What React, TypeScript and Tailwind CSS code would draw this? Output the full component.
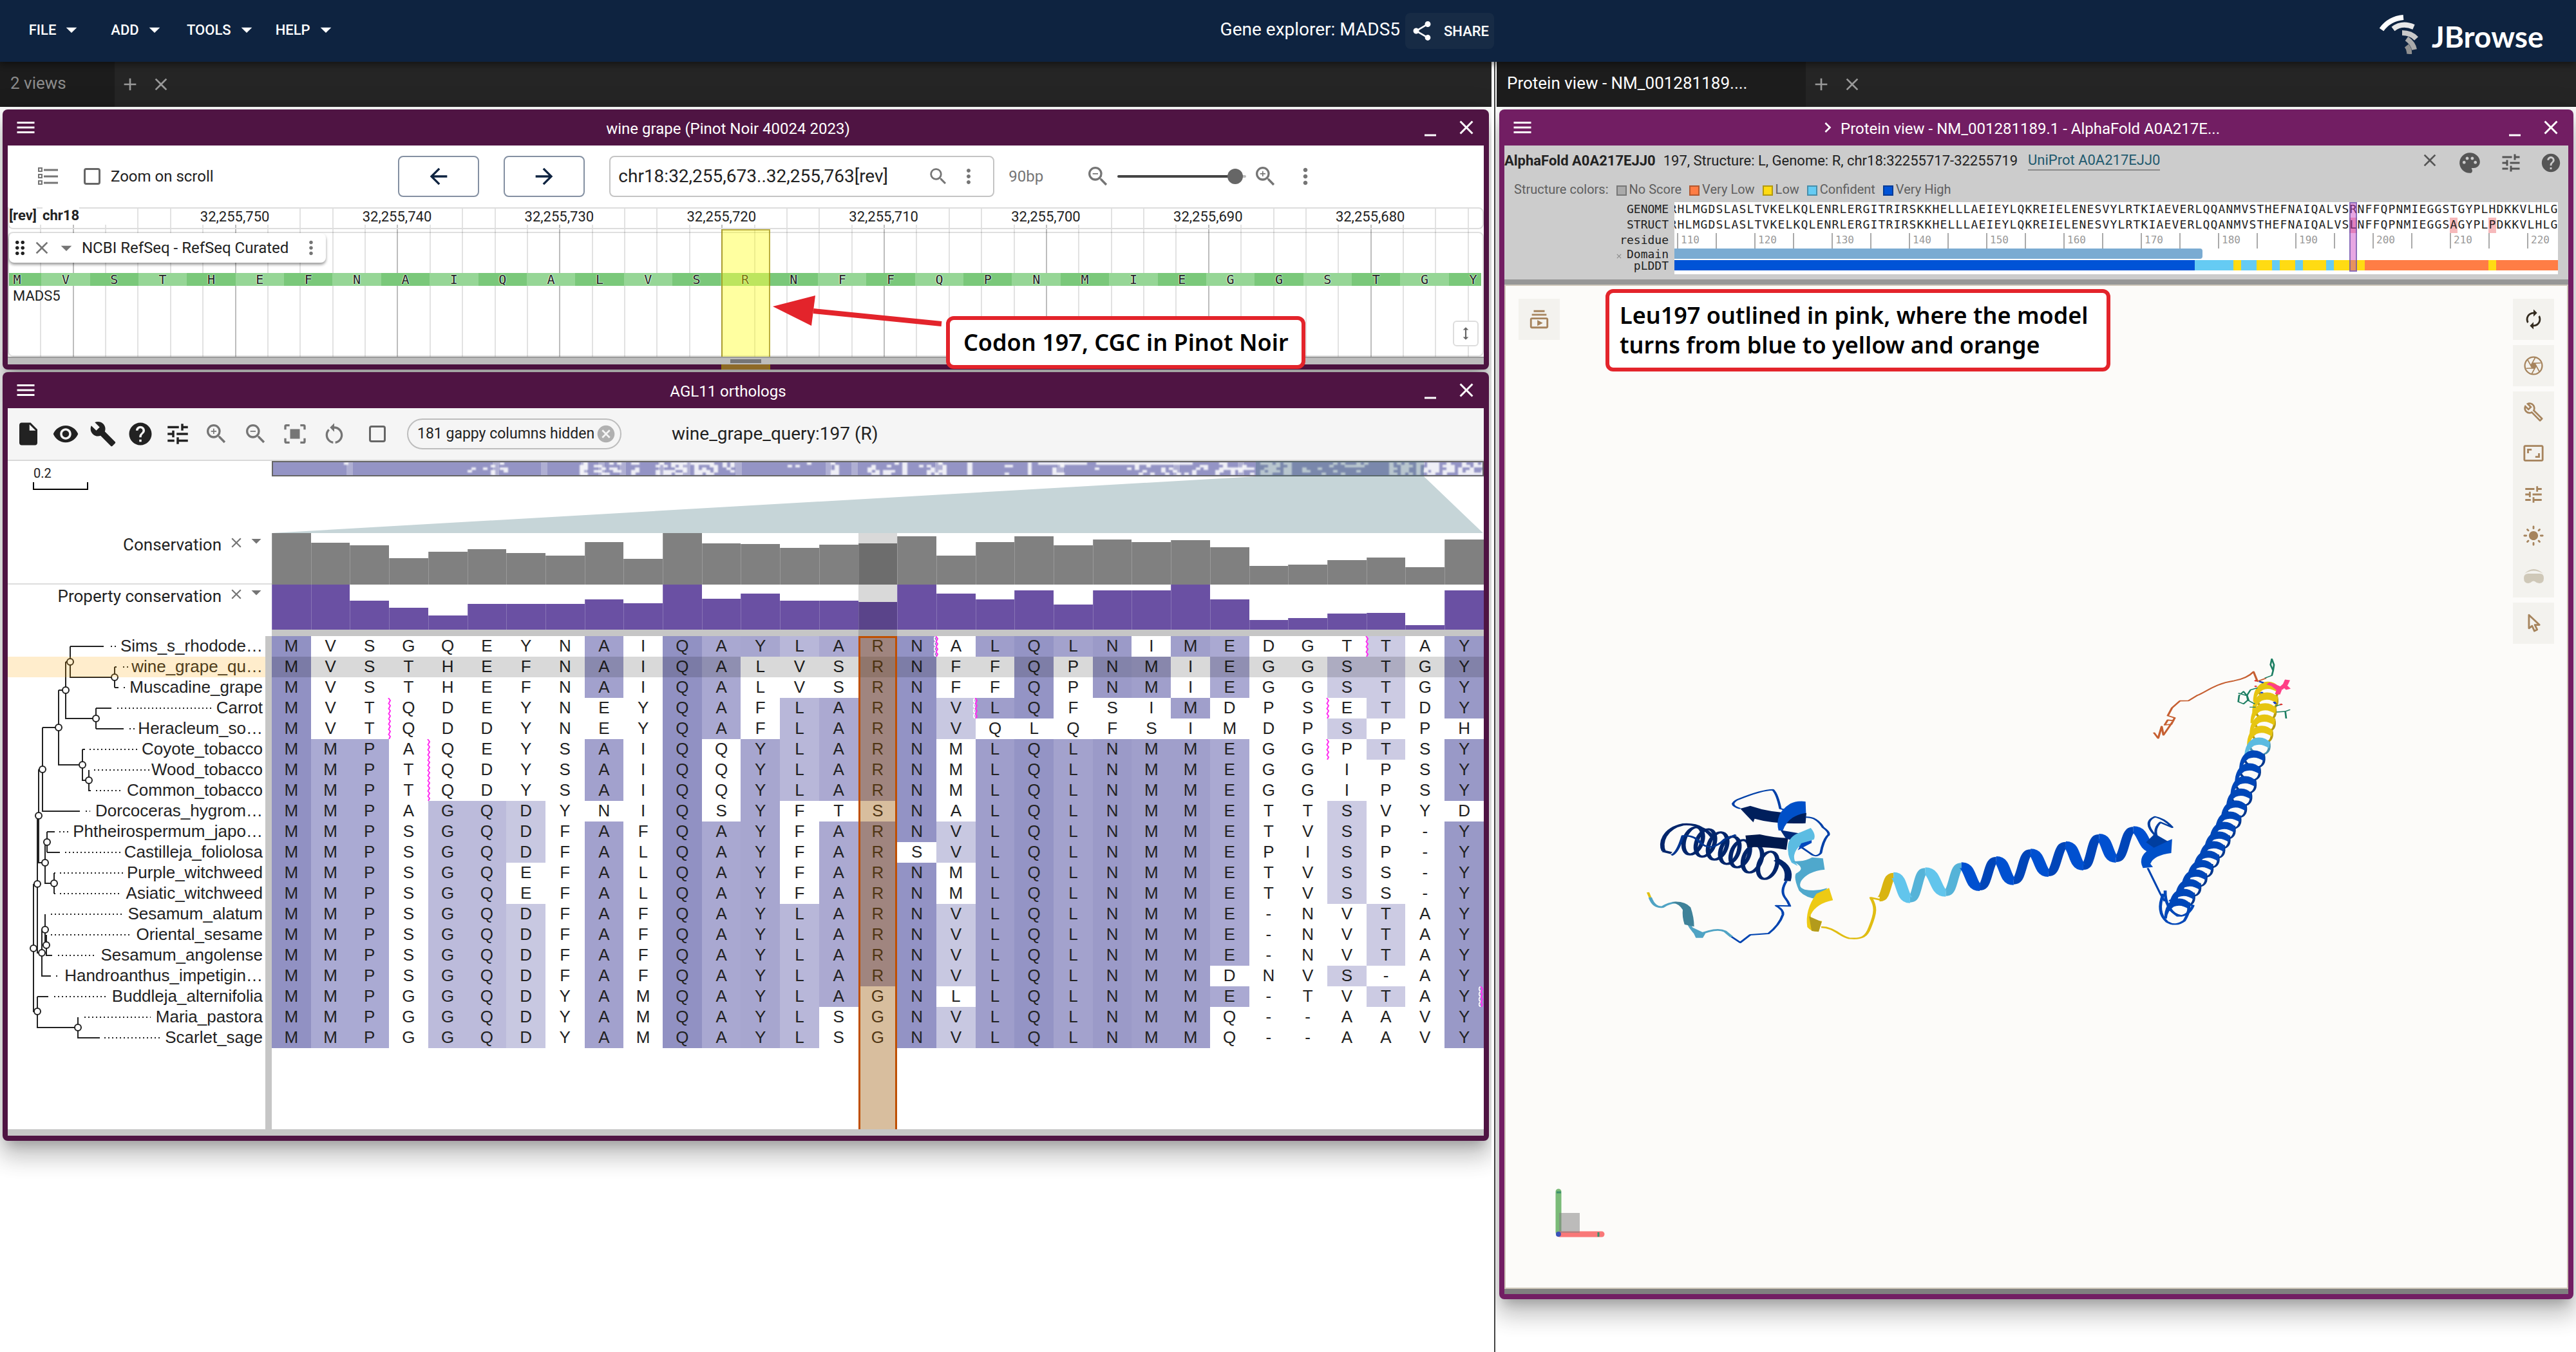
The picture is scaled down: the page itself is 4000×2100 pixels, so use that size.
import type { ReactNode } from "react";
import {
  MdArrowBack,
  MdArrowDropDown,
  MdArrowForward,
  MdAspectRatio,
  MdAutorenew,
  MdBuild,
  MdCancel,
  MdChevronRight,
  MdClose,
  MdDragIndicator,
  MdHeight,
  MdHelp,
  MdInsertDriveFile,
  MdLightMode,
  MdMenu,
  MdMinimize,
  MdMoreVert,
  MdOutlineBuild,
  MdOutlineSubscriptions,
  MdPalette,
  MdRestartAlt,
  MdSearch,
  MdShare,
  MdTune,
  MdVisibility,
  MdZoomIn,
  MdZoomOut,
  MdAdd,
} from "react-icons/md";

const BP_SHOWN = 91;
const pct = (n: number, total: number) => `${(n / total) * 100}%`;

export default function App() {
  return (
    <div className="flex min-h-screen flex-col bg-white text-[#222] [font-family:Roboto,sans-serif]">
      <AppHeader />
      <main className="grid flex-1 grid-cols-[2322fr_1678fr]">
        <section className="flex min-w-0 border-r-2 border-[#444] pr-1">
          <div className="min-w-0 flex-1 overflow-hidden">
            <TabBar label="2 views" />
            <div className="flex flex-col gap-1 p-1">
              <LinearGenomeView />
              <MsaView />
            </div>
          </div>
        </section>
        <section className="min-w-0 overflow-hidden pl-0.5">
          <TabBar label="Protein view - NM_001281189...." active />
          <div className="p-1">
            <ProteinView />
          </div>
        </section>
      </main>
    </div>
  );
}

function AppHeader() {
  return (
    <header className="relative z-10 flex h-24 items-center justify-between bg-[#0e2340] pr-[42px] pl-[22px] text-white shadow-[0_4px_10px_rgba(0,0,0,0.45)]">
      <nav className="flex pb-1">
        {["FILE", "ADD", "TOOLS", "HELP"].map((item) => (
          <button
            key={item}
            className="flex min-w-32 items-center justify-center px-3 text-[22px] font-medium"
          >
            {item}
            <MdArrowDropDown size={40} className="-mr-1 ml-1" />
          </button>
        ))}
      </nav>
      <div className="mr-4 flex items-center gap-2">
        <span className="pb-1 text-[28px]">Gene explorer: MADS5</span>
        <button className="flex h-14 items-center gap-4 rounded-lg bg-[#172b45] px-2 text-[22px] font-medium">
          <MdShare size={36} />
          SHARE
        </button>
      </div>
      <Logo />
    </header>
  );
}

function Logo() {
  return (
    <svg width="266" height="72" viewBox="0 0 266 72" fill="none" strokeWidth="8">
      <path d="M6 34 Q18 17 40 15" stroke="#fff" />
      <path d="M24 33 Q38 22 56 30" stroke="#e8e8e8" />
      <path d="M38 39 Q52 39 60 48" stroke="#c9c9c9" />
      <path d="M45 48 Q55 55 57 65" stroke="#aaa" />
      <path d="M45 59 Q50 65 49 72" stroke="#8f8f8f" />
      <text
        x="84"
        y="62"
        fill="#fff"
        className="text-[46px] font-bold [font-family:Lato,sans-serif]"
      >
        JBrowse
      </text>
    </svg>
  );
}

function TabBar({ label, active }: { label: string; active?: boolean }) {
  return (
    <div className="flex h-[70px] items-center bg-[#252525] text-[#999]">
      <div
        className={
          active
            ? "flex h-full w-[480px] items-center bg-[#1c1c1c] px-4 pb-1 text-[26px] text-white"
            : "flex h-full w-[178px] items-center bg-[#1c1c1c] px-4 pb-1 text-[26px] text-[#8c8c8c]"
        }
      >
        {label}
      </div>
      <button aria-label="Add view" className="ml-2">
        <MdAdd size={32} />
      </button>
      <button aria-label="Close tab" className="ml-4">
        <MdClose size={32} />
      </button>
    </div>
  );
}

function ViewWindow({
  title,
  protein,
  children,
}: {
  title: string;
  protein?: boolean;
  children: ReactNode;
}) {
  return (
    <article
      className={`rounded-lg pb-2 shadow-[0_14px_16px_-8px_rgba(0,0,0,0.2),0_24px_34px_4px_rgba(0,0,0,0.14),0_10px_44px_8px_rgba(0,0,0,0.12)] ${
        protein ? "bg-[#721e63]" : "bg-[#4f1443]"
      }`}
    >
      <header className="flex h-14 items-center pr-[17px] pl-[18px] text-white">
        <button aria-label="View menu">
          <MdMenu size={36} />
        </button>
        <h2 className="flex flex-1 items-center justify-center pt-1 text-[24px]">
          {protein && <MdChevronRight size={32} className="mr-1 -mt-1" />}
          {title}
        </h2>
        <button aria-label="Minimize" className="mr-5">
          <MdMinimize size={36} />
        </button>
        <button aria-label="Close view">
          <MdClose size={36} />
        </button>
      </header>
      <div className="mx-2">{children}</div>
    </article>
  );
}

/* ---------- linear genome view ---------- */

const CODONS = "MVSTHEFNAIQALVSRNFFQPNMIEGGSTGY".split("");
const MAJOR_TICKS = [4, 14, 24, 34, 44, 54, 64, 74, 84];
const MINOR_TICKS = Array.from({ length: 46 }, (_, i) => i * 2);

function LinearGenomeView() {
  return (
    <ViewWindow title="wine grape (Pinot Noir 40024 2023)">
      <div className="relative bg-white">
        <LgvControls />
        <Ruler />
        <div className="relative h-[198px]">
          <GridLines />
          <div className="absolute inset-x-0 top-1 bottom-0 rounded-lg border-2 border-[#0000001f]" />
          <TrackLabel />
          <div className="absolute top-[66px] right-1 left-0.5 h-6 overflow-hidden">
            {CODONS.map((aa, i) => (
              <span
                key={i}
                className={`absolute top-0 h-6 border-y-2 border-transparent bg-clip-padding text-center text-[20px] leading-5 [font-family:'DejaVu_Sans_Mono',monospace] [text-shadow:0_0_2px_#fff,0_0_2px_#fff] ${
                  i % 2 ? "bg-[#96d696]" : "bg-[#7ac87a]"
                }`}
                style={{ left: pct(i * 3 - 1, BP_SHOWN), width: pct(3, BP_SHOWN) }}
              >
                {aa}
              </span>
            ))}
          </div>
          <span className="absolute top-[90px] left-2 text-[22px] leading-7">MADS5</span>
          <button
            aria-label="Resize track"
            className="absolute right-2 bottom-4 flex h-10 w-10 items-center justify-center rounded-md border-2 border-[#ddd] bg-white text-[#666]"
          >
            <MdHeight size={26} />
          </button>
          <div
            className="absolute top-0 -bottom-5 border-x-2 border-t-2 border-[#8c780099] bg-[#ffff005f]"
            style={{ left: pct(44, BP_SHOWN), width: pct(3, BP_SHOWN) }}
          />
        </div>
        <div className="relative flex h-3 items-center justify-center border-t-2 border-[#999] bg-[#bdbdbd]">
          <div className="h-1.5 w-12 bg-[#757575]" />
        </div>
        <Annotation />
      </div>
    </ViewWindow>
  );
}

function LgvControls() {
  return (
    <div className="flex h-24 items-center pl-11">
      <button aria-label="Open track selector" className="text-[#757575]">
        <svg width="36" height="36" viewBox="0 0 36 36" fill="none" stroke="currentColor">
          {[8, 18, 28].map((y) => (
            <g key={y}>
              <rect x="4" y={y - 3} width="5" height="5" strokeWidth="2" />
              <path d={`M12 ${y}H34`} strokeWidth="3" />
            </g>
          ))}
        </svg>
      </button>
      <label className="ml-[38px] flex items-center gap-4 text-[24px]">
        <input
          type="checkbox"
          className="h-[26px] w-[26px] appearance-none rounded-sm border-[3px] border-[#666]"
        />
        Zoom on scroll
      </label>
      <div className="flex-1" />
      <div className="ml-[30px] flex items-center">
        <button
          aria-label="Pan left"
          className="flex h-16 w-[126px] items-center justify-center rounded-lg border-2 border-[#8490a2] text-[#0e2340]"
        >
          <MdArrowBack size={40} />
        </button>
        <button
          aria-label="Pan right"
          className="ml-[38px] flex h-16 w-[126px] items-center justify-center rounded-lg border-2 border-[#8490a2] text-[#0e2340]"
        >
          <MdArrowForward size={40} />
        </button>
        <div className="ml-[38px] flex h-16 w-[598px] items-center rounded-lg border-2 border-[#c4c4c4] pl-3 text-[#757575]">
          <input
            aria-label="Location"
            className="min-w-0 flex-1 text-[28px] text-[#222]"
            defaultValue="chr18:32,255,673..32,255,763[rev]"
          />
          <MdSearch size={34} />
          <MdMoreVert size={36} className="mr-5 ml-3" />
        </div>
        <span className="ml-[22px] w-[119px] text-[24px] text-[#757575]">90bp</span>
        <button aria-label="Zoom out" className="text-[#757575]">
          <MdZoomOut size={40} />
        </button>
        <input
          type="range"
          aria-label="Zoom"
          defaultValue={97}
          className="mx-2.5 h-1 w-[200px] appearance-none rounded bg-[linear-gradient(to_right,#444_92%,#bbb_92%)] [&::-webkit-slider-thumb]:h-6 [&::-webkit-slider-thumb]:w-6 [&::-webkit-slider-thumb]:appearance-none [&::-webkit-slider-thumb]:rounded-full [&::-webkit-slider-thumb]:bg-[#666]"
        />
        <button aria-label="Zoom in" className="text-[#757575]">
          <MdZoomIn size={40} />
        </button>
        <button aria-label="More" className="ml-[22px] text-[#757575]">
          <MdMoreVert size={40} />
        </button>
      </div>
      <div className="flex-1" />
    </div>
  );
}

function GridLines() {
  return (
    <>
      {MINOR_TICKS.map((bp) => (
        <div
          key={bp}
          className={`absolute inset-y-0 w-0.5 ${
            MAJOR_TICKS.includes(bp) ? "bg-[#bdbdbd]" : "bg-[#e2e2e2]"
          }`}
          style={{ left: pct(bp, BP_SHOWN) }}
        />
      ))}
    </>
  );
}

function Ruler() {
  return (
    <div className="relative h-[34px] overflow-hidden">
      <GridLines />
      {MAJOR_TICKS.map((bp, i) => (
        <span
          key={bp}
          className="absolute top-0.5 flex h-[25px] w-[110px] -translate-x-1/2 items-center justify-center bg-white text-[22px]"
          style={{ left: pct(bp, BP_SHOWN) }}
        >
          {i === 0 ? "" : `32,255,${760 - i * 10}`}
        </span>
      ))}
      <div className="absolute inset-0 rounded-lg border-2 border-[#ddd]" />
      <span className="absolute top-0 left-0.5 bg-white text-[22px] leading-[26px] font-bold">
        [rev]
      </span>
      <span className="absolute top-0 left-[54px] bg-white text-[22px] leading-[26px] font-bold">
        chr18
      </span>
    </div>
  );
}

function TrackLabel() {
  return (
    <div className="absolute top-1.5 left-0.5 flex h-[46px] w-[492px] items-center rounded-lg bg-white text-[24px] shadow-[0_3px_4px_rgba(0,0,0,0.4)]">
      <MdDragIndicator size={34} />
      <button aria-label="Close track" className="ml-px text-[#757575]">
        <MdClose size={32} />
      </button>
      <button aria-label="Collapse track" className="mr-1 ml-0.5 text-[#757575]">
        <MdArrowDropDown size={40} />
      </button>
      <span className="flex-1">NCBI RefSeq - RefSeq Curated</span>
      <button aria-label="Track menu" className="mr-1.5 text-[#757575]">
        <MdMoreVert size={34} />
      </button>
    </div>
  );
}

// callout and arrow float over the tracks
function Annotation() {
  return (
    <div className="absolute bottom-[-7px] left-[51.8%] flex w-[828px] items-start justify-end">
      <svg width="270" height="120" viewBox="0 0 270 120" className="absolute top-[-36px] left-0">
        <path d="M64 28L263 48" stroke="#e3242b" strokeWidth="8" />
        <path d="M1 21L67 4L61 51Z" fill="#e3242b" />
      </svg>
      <p className="flex h-[82px] w-[558px] items-center justify-center rounded-xl border-6 border-[#e3242b] bg-white text-[36px] font-semibold text-black [font-family:'Noto_Sans',sans-serif]">
        Codon 197, CGC in Pinot Noir
      </p>
    </div>
  );
}

/* ---------- multiple sequence alignment ---------- */

type Row = { name: string; seq: string; dots: [number, number]; inserts?: number[] };

const ROWS: Row[] = [
  { name: "Sims_s_rhodode…", seq: "MVSGQEYNAIQAYLARNALQLNIMEDGTTAY", dots: [172, 183], inserts: [17, 28] },
  { name: "wine_grape_qu…", seq: "MVSTHEFNAIQALVSRNFFQPNMIEGGSTGY", dots: [191, 200] },
  { name: "Muscadine_grape", seq: "MVSTHEFNAIQALVSRNFFQPNMIEGGSTGY", dots: [192, 197] },
  { name: "Carrot", seq: "MVTQDEYNEYQAFLARNVLQFSIMDPSETDY", dots: [182, 332], inserts: [3, 18, 27] },
  { name: "Heracleum_so…", seq: "MVTQDDYNEYQAFLARNVQLQFSIMDPSPPH", dots: [201, 211], inserts: [3] },
  { name: "Coyote_tobacco", seq: "MMPAQEYSAIQQYLARNMLQLNMMEGGPTSY", dots: [139, 215], inserts: [4, 27] },
  { name: "Wood_tobacco", seq: "MMPTQDYSAIQQYLARNMLQLNMMEGGIPSY", dots: [146, 232], inserts: [4] },
  { name: "Common_tobacco", seq: "MMPTQDYSAIQQYLARNMLQLNMMEGGIPSY", dots: [149, 190], inserts: [4] },
  { name: "Dorcoceras_hygrom…", seq: "MMPAGQDYNIQSYFTSNALQLNMMETTSVYD", dots: [133, 140] },
  { name: "Phtheirospermum_japo…", seq: "MMPSGQDFAFQAYFARNVLQLNMMETVSP-Y", dots: [92, 106] },
  { name: "Castilleja_foliolosa", seq: "MMPSGQDFALQAYFARSVLQLNMMEPISP-Y", dots: [101, 187] },
  { name: "Purple_witchweed", seq: "MMPSGQEFALQAYFARNMLQLNMMETVSS-Y", dots: [93, 191] },
  { name: "Asiatic_witchweed", seq: "MMPSGQEFALQAYFARNMLQLNMMETVSS-Y", dots: [93, 189] },
  { name: "Sesamum_alatum", seq: "MMPSGQDFAFQAYLARNVLQLNMME-NVTAY", dots: [79, 191] },
  { name: "Oriental_sesame", seq: "MMPSGQDFAFQAYLARNVLQLNMME-NVTAY", dots: [79, 205] },
  { name: "Sesamum_angolense", seq: "MMPSGQDFAFQAYLARNVLQLNMME-NVTAY", dots: [90, 150] },
  { name: "Handroanthus_impetigin…", seq: "MMPSGQDFAFQAYLARNVLQLNMMDNVS-AY", dots: [87, 92] },
  { name: "Buddleja_alternifolia", seq: "MMPGGQDYAMQAYLAGNLLQLNMME-TVTAY", dots: [84, 166], inserts: [31] },
  { name: "Maria_pastora", seq: "MMPGGQDYAMQAYLSGNVLQLNMMQ--AAVY", dots: [131, 234] },
  { name: "Scarlet_sage", seq: "MMPGGQDYAMQAYLSGNVLQLNMMQ--AAVY", dots: [162, 250] },
];

const N_COLS = 31;
const CONSENSUS = "MMP GQD A QAYLARNVLQLNMME  ST Y";
const SHADES = [
  "bg-[#9191c3]", "bg-[#aaaad3]", "bg-[#aaaad3]", "", "bg-[#bcbbdb]", "bg-[#bcbbdb]",
  "bg-[#c8c8e1]", "", "bg-[#a2a1cd]", "", "bg-[#9191c3]", "bg-[#a9a8d1]", "bg-[#a7a6cf]",
  "bg-[#b8b7d9]", "bg-[#aba9d1]", "bg-[#a5a4ce]", "bg-[#9393c5]", "bg-[#c8c8e1]",
  "bg-[#9f9ecb]", "bg-[#9494c5]", "bg-[#a3a2cd]", "bg-[#9b9ac8]", "bg-[#a09fcb]",
  "bg-[#a09fcb]", "bg-[#aaa9d2]", "", "", "bg-[#cccbe3]", "bg-[#cccbe3]", "", "bg-[#9999c7]",
];

const CONSERVATION = [
  80, 65, 61, 41, 51, 55, 49, 45, 66, 40, 80, 64, 63, 57, 62, 64, 75, 45, 66, 75, 61, 70, 66, 69,
  58, 29, 31, 38, 42, 27, 70,
];
const PROPERTY = [
  70, 70, 45, 34, 22, 40, 40, 40, 47, 41, 70, 48, 56, 45, 45, 43, 70, 56, 47, 61, 39, 61, 61, 70,
  47, 15, 18, 25, 26, 7, 61,
];

function MsaView() {
  return (
    <ViewWindow title="AGL11 orthologs">
      <MsaToolbar />
      <div className="flex bg-white">
        <div className="w-[410px] shrink-0">
          <div className="h-28 pt-[9px]">
            <span className="ml-10 text-[20px] leading-5">0.2</span>
            <div className="ml-[39px] h-3 w-[86px] border-2 border-t-0 border-black" />
          </div>
          <AnnotationTrackLabel name="Conservation" className="h-20 border-b-2 border-[#ddd]" />
          <AnnotationTrackLabel name="Property conservation" className="h-20" />
          <TreePane />
        </div>
        <div className="relative min-w-0 flex-1">
          <Minimap />
          <Histogram values={CONSERVATION} className="h-20" bar="bg-[#808080]" />
          <Histogram values={PROPERTY} className="h-[70px]" bar="bg-[#6a50a3]" />
          <div className="h-2.5 bg-[#c6c6c6]" />
          <AlignmentTable />
          <div
            className="absolute top-28 h-40 bg-black/15"
            style={{ left: pct(15, N_COLS), width: pct(1, N_COLS) }}
          />
          <div
            className="absolute top-[272px] bottom-0 border-3 border-b-0 border-[#bf4f00] bg-[#98540061]"
            style={{ left: pct(15, N_COLS), width: pct(1, N_COLS) }}
          />
        </div>
      </div>
      <div className="h-2.5 bg-[#c6c6c6]" />
    </ViewWindow>
  );
}

function MsaToolbar() {
  const dark = [MdInsertDriveFile, MdVisibility, MdBuild, MdHelp, MdTune];
  const light = [MdZoomIn, MdZoomOut, FitIcon, MdRestartAlt];
  return (
    <div className="flex h-[82px] items-center border-b-2 border-[#d9d9d9] bg-[#f5f5f5] pl-[3px]">
      {dark.map((Icon, i) => (
        <button key={i} className="flex w-[58px] justify-center text-[#222]">
          <Icon size={42} />
        </button>
      ))}
      {light.map((Icon, i) => (
        <button key={i} className="flex w-[61px] justify-center text-[#757575]">
          <Icon size={40} />
        </button>
      ))}
      <input
        type="checkbox"
        aria-label="Toggle selection"
        className="ml-6 h-[26px] w-[26px] appearance-none rounded-sm border-[3px] border-[#666]"
      />
      <div className="ml-[33px] flex h-12 w-[333px] items-center justify-between rounded-full border-2 border-[#bdbdbd] pr-1.5 pl-3.5 text-[23px]">
        181 gappy columns hidden
        <button aria-label="Show gappy columns" className="text-[#b0b0b0]">
          <MdCancel size={32} />
        </button>
      </div>
      <span className="ml-[78px] text-[28px]">wine_grape_query:197 (R)</span>
    </div>
  );
}

function FitIcon({ size }: { size: number }) {
  return (
    <svg width={size} height={size} viewBox="0 0 24 24" fill="currentColor">
      <rect x="7.5" y="7.5" width="9" height="9" />
      <path
        d="M3 8V5q0-1 1-1H7M17 4h3q1 0 1 1V8M21 16v3q0 1-1 1H17M7 20H4q-1 0-1-1V16"
        fill="none"
        stroke="currentColor"
        strokeWidth="2"
      />
    </svg>
  );
}

function AnnotationTrackLabel({ name, className }: { name: string; className: string }) {
  return (
    <div className={`flex items-start justify-end pt-0.5 pr-1.5 text-[26px] leading-8 ${className}`}>
      {name}
      <button aria-label={`Close ${name}`} className="ml-2.5 text-[#757575]">
        <MdClose size={26} />
      </button>
      <button aria-label={`${name} menu`} className="text-[#757575]">
        <MdArrowDropDown size={36} className="-mt-2" />
      </button>
    </div>
  );
}

function Histogram({
  values,
  className,
  bar,
}: {
  values: number[];
  className: string;
  bar: string;
}) {
  return (
    <div className={`flex items-end ${className}`}>
      {values.map((v, i) => (
        <div key={i} className={`flex-1 border-l border-white/20 ${bar}`} style={{ height: v }} />
      ))}
    </div>
  );
}

// [start, end, share of pixels that are gaps]
const GAP_REGIONS = [
  [112, 120, 0.15], [304, 312, 0.3], [328, 345, 0.35], [354, 366, 0.4], [390, 450, 0.05],
  [472, 490, 0.7], [500, 545, 0.25], [558, 568, 0.6], [596, 690, 0.55], [700, 738, 0.2],
  [795, 835, 0.2], [868, 880, 0.5], [925, 968, 0.35], [1005, 1045, 0.25], [1138, 1150, 0.6],
  [1200, 1300, 0.15], [1310, 1370, 0.2], [1375, 1530, 0.3], [1535, 1580, 0.55],
  [1600, 1700, 0.25], [1735, 1790, 0.5], [1788, 1882, 0.55],
];

// columns that are only partly conserved show as paler stripes
const PALE_STRIPES = [116, 343, 418, 480, 507, 540, 600, 640, 720, 860, 900, 1030, 1220, 1400, 1500];

function Minimap() {
  const gaps: ReactNode[] = [];
  let seed = 7;
  for (const [from, to, share] of GAP_REGIONS) {
    for (let x = from; x < to; x += 6) {
      for (let y = 2; y < 22; y += 4) {
        seed = (seed * 16807) % 2147483647;
        if (seed / 2147483647 < share) {
          gaps.push(<rect key={`${x}-${y}`} x={x} y={y} width="7" height="4" />);
        }
      }
    }
  }
  return (
    <svg
      viewBox="0 0 1882 112"
      preserveAspectRatio="none"
      className="block h-28 w-full"
    >
      <rect x="1" y="1" width="1880" height="22" fill="#9494c5" />
      <g fill="#fff" opacity="0.25">
        {PALE_STRIPES.map((x) => (
          <rect key={x} x={x} y="2" width="10" height="20" />
        ))}
      </g>
      <g fill="#fff" className="opacity-85 blur-[1px]">
        {gaps}
        <rect x="979" y="2" width="8" height="20" />
        <rect x="1080" y="2" width="8" height="20" />
        <rect x="1174" y="2" width="6" height="20" />
        <rect x="1190" y="2" width="76" height="4" />
        <rect x="1280" y="2" width="150" height="4" />
      </g>
      <path d="M1528 24H1789L1881 112H0Z" fill="#c6d5d8" />
      <rect x="1" y="1" width="1880" height="22" fill="none" stroke="#666" strokeWidth="2" />
      <rect x="1528" y="0" width="261" height="24" fill="#44707a" opacity="0.32" />
    </svg>
  );
}

function AlignmentTable() {
  return (
    <div className="h-[766px]">
      <table className="w-full table-fixed border-collapse text-center text-[26px] leading-[30px] [font-family:'Liberation_Sans',Arial,sans-serif]">
        <tbody>
          {ROWS.map((row, r) => (
            <tr key={r} className="h-8">
              {row.seq.split("").map((aa, c) => (
                <td
                  key={c}
                  className={`relative p-0 pb-0.5 ${aa === CONSENSUS[c] ? SHADES[c] : ""}`}
                >
                  {aa}
                  {row.inserts?.includes(c) && <InsertMark className="-left-1" />}
                  {c === N_COLS - 1 && row.inserts?.includes(N_COLS) && (
                    <InsertMark className="right-0" />
                  )}
                  {r === 1 && <span className="absolute inset-0 bg-black/15" />}
                </td>
              ))}
            </tr>
          ))}
        </tbody>
      </table>
    </div>
  );
}

function InsertMark({ className }: { className: string }) {
  return (
    <svg width="8" height="32" viewBox="0 0 8 32" className={`absolute top-0 z-10 ${className}`}>
      <path
        d="M3 0L0 4L3 8L0 12L3 16L0 20L3 24L0 28L3 32"
        fill="none"
        stroke="#fff"
        strokeWidth="2"
      />
      <path
        d="M3 0L6 4L4 8M3 8L6 12L4 16M3 16L6 20L4 24M3 24L6 28L4 32"
        fill="none"
        stroke="#ff2bf0"
        strokeWidth="2"
      />
    </svg>
  );
}

const TREE_LINES =
  "M109 1004H161M109 1004V1052H178M178 1036V1068M178 1036H181M178 1068H184M102 1028H109" +
  "M102 1028V1116H149M149 1100V1132M149 1100H173M149 1132H192M91 1072H102M91 1072V1188H128" +
  "M128 1164V1212H138M128 1164H132M138 1196V1228H141M66 1130H91M66 1130V1260H124M60 1195H66" +
  "M60 1195V1340H70M70 1308V1372H84M70 1308H73M73 1292V1324M73 1292H85M73 1324H93M84 1356V1388" +
  "M84 1356H86M84 1388H86M58 1267H60M58 1267V1480H65M65 1444V1516H79M65 1444H70M70 1420V1468H72" +
  "M72 1452V1484H81M52 1373H58M52 1373V1571H58M58 1548V1596H121M58 1548H75M121 1580V1612H155";

const TREE_NODES = [
  [109, 1028], [178, 1052], [102, 1072], [149, 1116], [91, 1130], [128, 1188], [138, 1212],
  [66, 1195], [60, 1267], [73, 1308], [70, 1340], [84, 1372], [58, 1373], [70, 1444],
  [72, 1468], [65, 1480], [52, 1473], [58, 1571], [121, 1596],
];

function TreePane() {
  return (
    <div className="relative h-[766px] border-r-10 border-[#c6c6c6]">
      <ul className="pr-1 text-right text-[26px] [font-family:'Liberation_Sans',Arial,sans-serif]">
        {ROWS.map((row) => (
          <li key={row.name} className="h-8 leading-[30px]">
            {row.name}
          </li>
        ))}
      </ul>
      <svg
        width="400"
        height="640"
        viewBox="12 988 400 640"
        fill="none"
        stroke="#222"
        strokeWidth="2"
        className="absolute top-0 left-0"
      >
        <path d={TREE_LINES} />
        {ROWS.map((row, i) => (
          <path
            key={row.name}
            d={`M${row.dots[0]} ${1004 + i * 32}H${row.dots[1]}`}
            strokeDasharray="2 4"
          />
        ))}
        {TREE_NODES.map(([x, y]) => (
          <circle key={`${x}-${y}`} cx={x} cy={y} r="5" fill="#fff" />
        ))}
      </svg>
      <div className="absolute inset-x-0 top-8 h-8 bg-[#ffa50033]" />
    </div>
  );
}

/* ---------- protein view ---------- */

const GENOME_SEQ =
  "RHLMGDSLASLTVKELKQLENRLERGITRIRSKKHELLLAEIEYLQKREIELENESVYLRTKIAEVERLQQANMVSTHEFNAIQALVSRNFFQPNMIEGGSTGYPLHDKKVLHLG";
const STRUCT_SEQ =
  "RHLMGDSLASLTVKELKQLENRLERGITRIRSKKHELLLAEIEYLQKREIELENESVYLRTKIAEVERLQQANMVSTHEFNAIQALVSLNFFQPNMIEGGSAGYPLPDKKVLHLG";

const LEGEND = [
  ["No Score", "bg-[#aaa] border-[#777]"],
  ["Very Low", "bg-[#ff7d45] border-[#b3582f]"],
  ["Low", "bg-[#ffdb13] border-[#b3990d]"],
  ["Confident", "bg-[#65cbf3] border-[#478eaa]"],
  ["Very High", "bg-[#0053d6] border-[#003a96]"],
];

const HIGH = "bg-[#0053d6]";
const CONF = "bg-[#65cbf3]";
const LOW = "bg-[#ffdb13]";
const VLOW = "bg-[#ff7d45]";
const PLDDT: [string, number][] = [
  [HIGH, 68], [CONF, 5], [LOW, 1], [CONF, 2], [LOW, 2], [CONF, 1], [LOW, 2], [CONF, 1],
  [LOW, 3], [CONF, 1], [LOW, 4], [VLOW, 16], [LOW, 1], [VLOW, 8],
];

function ProteinView() {
  return (
    <ViewWindow
      protein
      title="Protein view - NM_001281189.1 - AlphaFold A0A217E..."
    >
      <div className="bg-[#ccc]">
        <div className="flex h-[54px] items-center text-[22px]">
          <b className="mr-3 pb-2">AlphaFold A0A217EJJ0</b>
          <span className="mr-4 pb-2">197, Structure: L, Genome: R, chr18:32255717-32255719</span>
          <a href="#uniprot" className="mb-1.5 border-b-2 border-[#8a8a8a] leading-7 text-[#1f5a6e]">
            UniProt A0A217EJJ0
          </a>
          <div className="ml-auto flex items-center gap-[27px] pr-2.5 text-[#555]">
            <button aria-label="Clear selection" className="mb-2">
              <MdClose size={32} />
            </button>
            <button aria-label="Colors">
              <MdPalette size={38} />
            </button>
            <button aria-label="Settings">
              <MdTune size={36} />
            </button>
            <button aria-label="Help">
              <MdHelp size={34} />
            </button>
          </div>
        </div>
        <div className="flex h-[34px] items-center gap-3 pb-1.5 pl-[15px] text-[20px] text-[#5f5f5f]">
          <span>Structure colors:</span>
          {LEGEND.map(([name, color]) => (
            <span key={name} className="flex items-center gap-1">
              <span className={`mt-1 h-4 w-4 border-2 ${color}`} />
              {name}
            </span>
          ))}
        </div>
        <SequencePanel />
        <div className="h-2 bg-[#979797]" />
      </div>
      <MolecularViewer />
      <div className="h-2 bg-[#808080]" />
    </ViewWindow>
  );
}

function SequencePanel() {
  return (
    <div className="flex pr-4 pb-2 [font-family:'DejaVu_Sans_Mono',monospace]">
      <div className="mr-[9px] w-[255px] shrink-0 text-right text-[18px]">
        <div className="h-6 leading-[22px]">GENOME</div>
        <div className="h-6 leading-[22px]">STRUCT</div>
        <div className="h-6 leading-[22px]">residue</div>
        <div className="flex h-4 items-center justify-end gap-1.5">
          <MdClose size={12} className="mt-2 text-[#888]" />
          Domain
        </div>
        <div className="flex h-5 items-center justify-end">pLDDT</div>
      </div>
      <div className="relative h-28 min-w-0 flex-1 overflow-hidden bg-white">
        <div className="absolute top-0 -left-2 w-[1380px]">
          {[GENOME_SEQ, STRUCT_SEQ].map((seq, s) => (
            <div key={s} className="flex h-6 text-[18px] leading-[22px]">
              {seq.split("").map((aa, i) => (
                <span
                  key={i}
                  className={`w-3 text-center ${
                    s === 1 && aa !== GENOME_SEQ[i] ? "bg-[#f6b9bb]" : ""
                  }`}
                >
                  {aa}
                </span>
              ))}
            </div>
          ))}
          <div className="flex h-6 pl-3 text-[16px] leading-[22px] text-[#999]">
            {Array.from({ length: 23 }, (_, i) => (
              <span key={i} className="w-[60px] shrink-0 border-l-2 border-[#aaa] pl-1">
                {i % 2 === 0 ? 110 + i * 5 : ""}
              </span>
            ))}
          </div>
          <div className="h-4 w-[828px] rounded-r bg-[#7aabd2]" />
          <div className="mt-0.5 flex h-4">
            {PLDDT.map(([color, n], i) => (
              <div key={i} className={color} style={{ width: n * 12 }} />
            ))}
          </div>
          <div className="absolute top-0 left-[1056px] h-[108px] w-3 border-2 border-[#5a50a8a6] bg-[#c835c070]" />
        </div>
      </div>
    </div>
  );
}

function MolecularViewer() {
  const sideButton = "flex h-16 w-16 items-center justify-center bg-[#f3f2ee]";
  return (
    <div className="relative h-[1560px] border-2 border-[#cfc8ba] bg-[#fcfbf9] p-5 text-[#a6845d]">
      <Structure />
      <div className="relative flex items-start justify-between">
        <button aria-label="Snapshots" className={sideButton}>
          <MdOutlineSubscriptions size={34} />
        </button>
        <div className="flex flex-col gap-2">
          <button aria-label="Reset camera" className={`${sideButton} text-[#332b1f]`}>
            <MdAutorenew size={34} />
          </button>
          <button aria-label="Screenshot" className={sideButton}>
            <IrisIcon />
          </button>
          <div>
            <button aria-label="Controls" className={sideButton}>
              <MdOutlineBuild size={32} />
            </button>
            <button aria-label="Expand" className={sideButton}>
              <MdAspectRatio size={34} />
            </button>
            <button aria-label="Settings" className={sideButton}>
              <MdTune size={34} />
            </button>
            <button aria-label="Illumination" className={sideButton}>
              <MdLightMode size={34} />
            </button>
            <button aria-label="Headset" className={sideButton}>
              <svg width="32" height="26" viewBox="0 0 32 26" fill="#cfc8b8">
                <path d="M2 8Q16 -6 31 8Q16 -1 2 8Z" />
                <path d="M8 8H26Q32 8 32 15Q32 23 25 23Q21 23 18 20Q16 19 14 20Q11 23 8 23Q1 23 1 15Q1 8 8 8Z" />
              </svg>
            </button>
          </div>
          <button aria-label="Selection mode" className={sideButton}>
            <svg width="34" height="34" viewBox="0 0 24 24" fill="none" stroke="currentColor" strokeWidth="2">
              <path d="M7 3V17.5L10.5 15L13 20.5L16 19L13.5 13.8H18.5Z" strokeLinejoin="round" />
            </svg>
          </button>
        </div>
      </div>
      <p className="absolute top-[5px] left-[155px] w-[784px] rounded-xl border-6 border-[#e3242b] bg-white py-3 pl-4 text-[36px] leading-[46px] font-semibold text-black [font-family:'Noto_Sans',sans-serif]">
        Leu197 outlined in pink, where the model
        <br />
        turns from blue to yellow and orange
      </p>
    </div>
  );
}

function IrisIcon() {
  return (
    <svg width="34" height="34" viewBox="0 0 24 24" fill="none" stroke="currentColor">
      <circle cx="12" cy="12" r="9.5" strokeWidth="1.6" />
      <circle cx="12" cy="12" r="2.6" fill="currentColor" />
      <path d="M9.5 11L14 3M11 9.5L20 9M14 10.5L18.5 18.5M14.5 13L10 21M13 14.5L4 15M10 13.5L5.5 5.5" strokeWidth="1.2" />
    </svg>
  );
}

// zig-zag of the long horizontal helix, peak / trough pairs
const HELIX = [
  [560, 1190], [592, 1078], [630, 1194], [665, 1056], [712, 1164], [748, 1032], [790, 1138],
  [828, 1004], [868, 1110], [907, 969], [948, 1072], [988, 934], [1028, 1042], [1064, 899],
  [1103, 1006], [1143, 864], [1190, 960],
];

// centres of the turns of the tall helix
const TURNS = [
  [1450, 195], [1448, 245], [1444, 295], [1442, 348], [1436, 400], [1430, 455], [1418, 515],
  [1408, 575], [1398, 635], [1388, 693], [1376, 748], [1363, 800], [1350, 848], [1338, 893],
  [1326, 938], [1313, 982], [1299, 1026], [1285, 1070], [1271, 1115], [1257, 1160],
  [1246, 1205],
];

function bend(a: number[], b: number[]) {
  const dx = (b[0] - a[0]) * 0.5;
  return `M${a[0]} ${a[1]}C${a[0] + dx} ${a[1]} ${b[0] - dx} ${b[1]} ${b[0]} ${b[1]}`;
}

function Structure() {
  const segment = (i: number) => {
    if (i === 0) return ["#f0cd12", "#d9b410"];
    if (i < 5) return ["#62c5ec", "#55b3d8"];
    return ["#0050d0", "#0045b8"];
  };
  const turnColor = (i: number) => {
    if (i < 5) return ["#e6c511", "#b59a10"];
    if (i < 6) return ["#5cbbe0", "#4690ae"];
    return ["#0047b8", "#00368c"];
  };
  return (
    <svg viewBox="0 0 1648 1556" fill="none" className="absolute inset-0 h-full w-full">
      <svg
        x="202"
        y="556"
        width="1060"
        height="500"
        viewBox="0 0 1568 1500"
        preserveAspectRatio="none"
        strokeLinejoin="round"
      >
        {/* N-terminal strand and loops */}
        <g strokeWidth="6">
          <path d="M28 1158L33 1182" stroke="#e0c010" />
          <path d="M33 1182Q42 1232 62 1226Q85 1196 106 1212Q125 1240 118 1285Q124 1325 142 1358Q185 1320 205 1340L220 1365" stroke="#4fa3c4" strokeWidth="8" />
          <path d="M82 1203Q112 1196 126 1228Q134 1275 134 1318L112 1308Q106 1270 108 1240Q100 1212 82 1203Z" fill="#3f8299" />
          <path d="M126 1318L160 1350L154 1370L138 1370Z" fill="#4fa3c4" />
          <path d="M220 1365L240 1392L263 1356L305 1350Q330 1310 338 1262Q340 1240 322 1220L354 1222Q350 1200 342 1180Q332 1150 346 1105" stroke="#0043b0" />
        </g>
        <g stroke="#00256b" strokeWidth="10">
          <path d="M64 965C55 930 65 860 108 842Q135 838 150 858Q165 870 176 900" />
          <path d="M62 965L82 975" />
          {[[132, 918], [160, 928], [188, 942], [216, 962], [240, 978], [268, 1002], [303, 1032]].map(([x, y]) => (
            <ellipse key={x} cx={x} cy={y} rx="21" ry="64" transform={`rotate(7 ${x} ${y})`} />
          ))}
          <path d="M322 1005Q358 1040 348 1105" strokeWidth="16" />
          <path d="M82 985Q96 975 108 895Q135 890 150 930Q175 970 205 910L230 890" stroke="#003590" strokeWidth="7" />
        </g>
        <path d="M252 893L285 888Q320 905 350 905L346 960Q300 945 256 948Z" fill="#00194d" />
        <path d="M332 868L380 885V935L344 905Z" fill="#002a78" />
        <path d="M240 768L263 755Q320 795 392 788L390 836Q320 842 273 815L270 832Z" fill="#001f5c" />
        <g stroke="#0040a8" strokeWidth="6">
          <path d="M240 768Q210 750 235 725Q290 680 315 680Q325 700 332 768L350 778" />
          <path d="M390 808Q415 805 430 855Q450 885 440 895Q430 920 425 975Q415 1000 400 975L375 940" />
        </g>
        <path d="M328 870Q318 790 355 745Q370 730 390 735L391 788Q350 800 338 870Z" fill="#0050c8" />
        <path d="M350 968Q345 910 370 885L402 858Q415 890 409 912Q370 930 364 985Q362 1010 372 1035L358 1020Q350 990 350 968Z" fill="#5cbce2" />
        <path d="M380 930L404 915V928L372 962Z" fill="#0048bd" />
        <path d="M358 1012Q385 1018 405 995L430 1000L434 1052Q395 1060 380 1105Q372 1135 388 1145Q415 1155 440 1138L420 1190Q390 1185 375 1150Q362 1090 368 1070Q395 1045 358 1012Z" fill="#4fa8cc" />
        <path d="M415 1165L444 1138L453 1195Q415 1210 402 1262V1285L428 1292L420 1340Q405 1345 394 1320Q388 1240 415 1165Z" fill="#edca14" />
        <path d="M398 1270L427 1295L420 1342L404 1338Z" fill="#b39b1c" />
        <path d="M426 1320C455 1320 470 1365 490 1372C520 1378 530 1365 538 1320C552 1250 552 1225 540 1183L562 1193" stroke="#e0bd12" strokeWidth="7" />

        {/* horizontal helix: receding halves first, facing halves on top */}
        {HELIX.slice(1).map((p, i) =>
          i % 2 === 0 ? (
            <path key={i} d={bend(HELIX[i], p)} stroke={segment(i)[1]} strokeWidth="22" />
          ) : null
        )}
        {HELIX.slice(1).map((p, i) =>
          i % 2 === 1 ? (
            <path key={i} d={bend(HELIX[i], p)} stroke={segment(i)[0]} strokeWidth="28" />
          ) : null
        )}
        <path d="M1165 1045Q1150 985 1190 945L1232 910L1230 975Q1190 985 1182 1025L1188 1040Z" fill="#0050c8" />
        <path d="M1172 925L1192 885L1222 920L1190 950Z" fill="#003e9f" />
        <path d="M1192 890Q1165 830 1192 806Q1215 815 1232 855L1205 832Q1190 860 1196 895" stroke="#003e9f" strokeWidth="6" />
        <path d="M1176 1045L1205 1165L1215 1200" stroke="#0043b0" strokeWidth="5" />

        {/* tall helix */}
        {TURNS.map(([x, y], i) => (
          <g key={y}>
            <path
              d={`M${x + 24} ${y}Q${x + 30} ${y + 55} ${x + 8} ${y + 62}Q${x - 14} ${y + 55} ${x - 20} ${y + 25}`}
              stroke={turnColor(i)[1]}
              strokeWidth="6"
            />
            <path
              d={`M${x - 32} ${y + 75}Q${x - 32} ${y + 5} ${x - 8} ${y - 16}Q${x + 14} ${y - 26} ${x + 27} ${y + 5}L${x + 25} ${y + 32}Q${x + 6} ${y + 6} ${x - 10} ${y + 20}Q${x - 25} ${y + 40} ${x - 26} ${y + 75}Z`}
              fill={turnColor(i)[0]}
            />
          </g>
        ))}
        <g stroke="#0047b8" strokeWidth="7">
          <path d="M1212 1165Q1195 1250 1220 1295Q1240 1320 1260 1290Q1275 1240 1268 1215" />
          <path d="M1216 1150Q1215 1230 1245 1268Q1270 1270 1280 1220L1225 1195" />
        </g>

        {/* disordered tail */}
        <path
          d="M1448 160L1428 175L1419 130Q1405 160 1375 172C1330 185 1310 225 1290 240L1270 265L1250 266L1232 298L1222 335L1238 345L1230 375L1215 378L1222 355L1235 358L1212 425L1208 385L1200 440L1190 413"
          stroke="#c65f31"
          strokeWidth="5"
        />

        {/* side chains near the selected residue */}
        <g stroke="#1d7f63" strokeWidth="4">
          <path d="M1445 160L1461 148L1464 125L1458 98L1461 70L1466 98L1464 125" />
          <path d="M1428 205L1412 215L1404 240L1408 265L1422 280" />
          <path d="M1384 230L1404 242L1406 262L1396 280L1384 270L1386 240L1396 222L1404 242" />
          <path d="M1410 295H1424M1472 318L1492 315L1503 307M1492 315L1494 348M1470 290L1484 282" />
        </g>
        <path d="M1432 175L1442 182M1436 225L1440 230M1466 270L1470 280" stroke="#1340c0" strokeWidth="6" />
        <path d="M1422 170L1426 174M1422 200L1426 196M1480 284L1485 281" stroke="#e02b2b" strokeWidth="6" />
        <path d="M1452 184L1464 192L1478 215L1474 235M1464 192L1482 208L1492 190L1497 168M1490 195L1499 212" stroke="#ff3f86" strokeWidth="12" />
      </svg>

      {/* orientation axes */}
      <g strokeLinecap="round" strokeWidth="9">
        <path d="M82 1407V1470" stroke="#7abb78" />
        <path d="M84 1473H149" stroke="#f97878" />
      </g>
      <path d="M79 1408H86M144 1470V1477" stroke="#3c8f6c" strokeWidth="3" />
      <rect x="83" y="1440" width="32" height="31" fill="#808080" opacity="0.52" />
      <circle cx="82" cy="1473" r="4" fill="#3a52b8" />
    </svg>
  );
}
